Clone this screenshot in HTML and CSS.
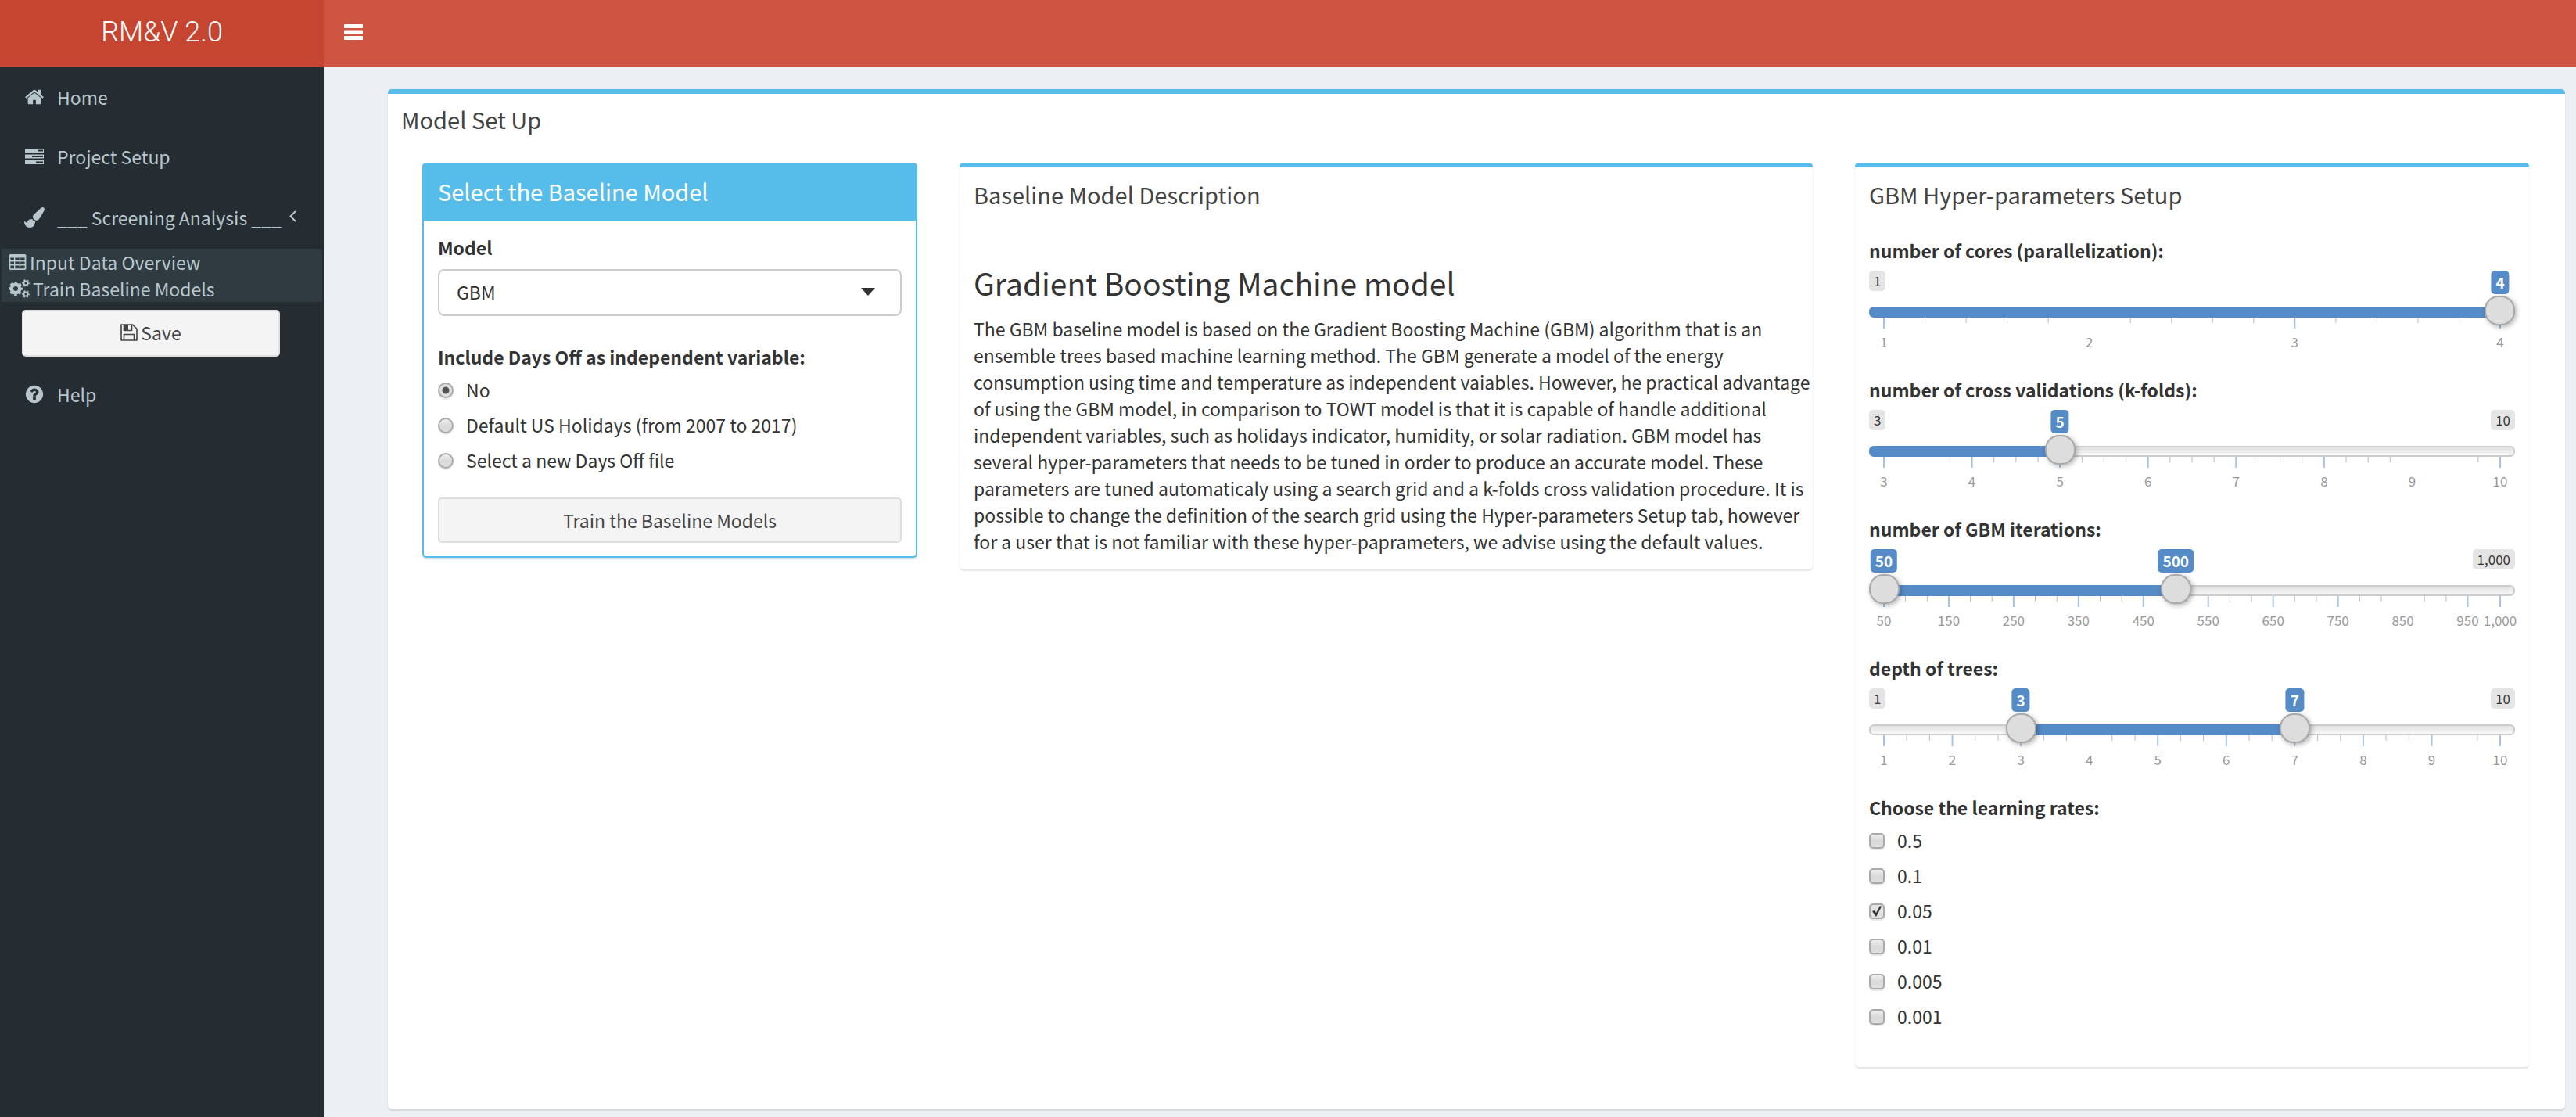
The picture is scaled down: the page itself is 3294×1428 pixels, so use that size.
FILE: index.html
```html
<!DOCTYPE html>
<html lang="en">
<head>
<meta charset="utf-8">
<title>RM&amp;V 2.0</title>
<link rel="stylesheet" href="styles.css">
</head>
<body>
<header class="topbar">
  <a class="logo" href="#">RM&amp;V 2.0</a>
  <nav class="navbar">
    <button class="toggle" type="button" aria-label="Toggle navigation">
      <svg class="icon-bars" viewBox="0 0 24 20"><rect width="24" height="5" rx="1"/><rect y="7.500" width="24" height="5" rx="1"/><rect y="15" width="24" height="5" rx="1"/></svg>
    </button>
  </nav>
</header>
<div class="layout">
  <aside class="sidebar">
    <a class="item" href="#">
      <svg class="icon" viewBox="0 0 1792 1792"><path d="M1472 992v480q0 26-19 45t-45 19h-384v-384h-256v384h-384q-26 0-45-19t-19-45v-480q0-1 .5-3t.5-3l575-474 575 474q1 2 1 6zm223-69l-62 74q-8 9-21 11h-3q-13 0-21-7l-692-577-692 577q-12 8-24 7-13-2-21-11l-62-74q-8-10-7-23.500t11-21.500l719-599q32-26 76-26t76 26l244 204v-195q0-14 9-23t23-9h192q14 0 23 9t9 23v408l219 182q10 8 11 21.500t-7 23.500z"/></svg>
      <span>Home</span>
    </a>
    <a class="item" href="#">
      <svg class="icon" viewBox="0 0 26 26"><path fill-rule="evenodd" d="M1 3h24v5H1zM18 4.500v2h6v-2zM1 10.500h24v5H1zM10 12v2h14v-2zM1 18h24v5H1zM15 19.500v2h9v-2z"/></svg>
      <span>Project Setup</span>
    </a>
    <a class="item item-tall" href="#">
      <svg class="icon" viewBox="0 0 1792 1792"><path d="M1615 0q70 0 122.500 46.500t52.500 116.500q0 63-45 151-332 629-465 752-97 91-218 91-126 0-216.500-92.500t-90.500-219.500q0-128 92-212l638-579q59-54 130-54zm-909 1034q39 76 106.500 130t150.500 76l1 71q4 213-129.500 347t-348.500 134q-123 0-218-46.500t-152.500-127.500-86.500-183-29-220q7 5 41 30t62 44.500 59 36.500 46 17q41 0 55-37 25-66 57.500-112.500t69.500-76 88-47.500 103-25.500 125-10.500z"/></svg>
      <span>___ Screening Analysis ___</span>
      <svg class="angle" viewBox="0 0 9 15"><path d="M8 1 1.500 7.500 8 14"/></svg>
    </a>
    <div class="submenu">
      <a class="subitem" href="#">
        <svg class="icon-table" viewBox="0 0 24 22"><path fill-rule="evenodd" d="M2 0h20q2 0 2 2v18q0 2-2 2H2q-2 0-2-2V2q0-2 2-2zM2 5v3.500h5V5zM8.500 5v3.500h6V5zM16 5v3.500h6V5zM2 10.500v3.500h5v-3.500zM8.500 10.500v3.500h6v-3.500zM16 10.500v3.500h6v-3.500zM2 16v4h5v-4zM8.500 16v4h6v-4zM16 16v4h6v-4z"/></svg>
        Input Data Overview
      </a>
      <a class="subitem" href="#">
        <svg class="icon-cogs" viewBox="0 0 27 24">
          <g fill="none" stroke="currentColor">
            <circle cx="9" cy="12" r="5.200" stroke-width="4.400"/>
            <circle cx="9" cy="12" r="7.700" stroke-width="2.800" stroke-dasharray="3.300 2.748" stroke-dashoffset="1.650"/>
            <circle cx="22" cy="5" r="2.600" stroke-width="2"/>
            <circle cx="22" cy="5" r="4" stroke-width="1.800" stroke-dasharray="2 2.189" stroke-dashoffset="1"/>
            <circle cx="22" cy="19" r="2.600" stroke-width="2"/>
            <circle cx="22" cy="19" r="4" stroke-width="1.800" stroke-dasharray="2 2.189" stroke-dashoffset="1"/>
          </g>
        </svg>
        Train Baseline Models
      </a>
    </div>
    <button class="btn btn-save" type="button">
      <svg class="icon-save" viewBox="0 0 22 22"><path fill="none" stroke="currentColor" stroke-width="1.600" stroke-linejoin="round" d="M1 1h14.500L21 6.500V21H1zM4.500 21v-7.500h13V21M4.500 1v7.500h10V1"/><path d="M5 1.500h5v6.500H5z"/></svg>
      Save
    </button>
    <a class="item" href="#">
      <svg class="icon" viewBox="0 0 1792 1792"><path d="M1024 1376v-192q0-14-9-23t-23-9h-192q-14 0-23 9t-9 23v192q0 14 9 23t23 9h192q14 0 23-9t9-23zm256-672q0-88-55.500-163t-138.500-116-170-41q-243 0-371 213-15 24 8 42l132 100q7 6 19 6 16 0 25-12 53-68 86-92 34-24 86-24 48 0 85.500 26t37.500 59q0 38-20 61t-68 45q-63 28-115.500 86.500t-52.500 125.500v36q0 14 9 23t23 9h192q14 0 23-9t9-23q0-19 21.500-49.500t54.500-49.500q32-18 49-28.500t46-35 44.500-48 28-60.500 12.500-81zm384 192q0 209-103 385.500t-279.500 279.500-385.500 103-385.500-103-279.500-279.500-103-385.500 103-385.500 279.500-279.500 385.500-103 385.500 103 279.500 279.500 103 385.500z"/></svg>
      <span>Help</span>
    </a>
  </aside>
  <main class="content">
    <section class="box box-outer">
      <h2 class="box-title">Model Set Up</h2>
      <div class="columns">
        <div class="column">
          <section class="box box-solid">
            <h3 class="box-title">Select the Baseline Model</h3>
            <form class="box-body">
              <label class="label" for="model">Model</label>
              <div class="select-wrap">
                <select class="select" id="model"><option>GBM</option><option>TOWT</option></select>
                <svg class="caret" viewBox="0 0 18 10"><path d="M0 0h18L9 10z"/></svg>
              </div>
              <fieldset class="group">
                <legend class="label">Include Days Off as independent variable:</legend>
                <div class="options">
                  <label class="option"><input class="radio" type="radio" name="daysoff" checked>No</label>
                  <label class="option"><input class="radio" type="radio" name="daysoff">Default US Holidays (from 2007 to 2017)</label>
                  <label class="option"><input class="radio" type="radio" name="daysoff">Select a new Days Off file</label>
                </div>
              </fieldset>
              <button class="btn btn-train" type="button">Train the Baseline Models</button>
            </form>
          </section>
        </div>
        <div class="column">
          <section class="box">
            <h3 class="box-title">Baseline Model Description</h3>
            <div class="box-body box-text">
              <h4 class="heading">Gradient Boosting Machine model</h4>
              <p class="text">The GBM baseline model is based on the Gradient Boosting Machine (GBM) algorithm that is an<br>
              ensemble trees based machine learning method. The GBM generate a model of the energy<br>
              consumption using time and temperature as independent vaiables. However, he practical advantage<br>
              of using the GBM model, in comparison to TOWT model is that it is capable of handle additional<br>
              independent variables, such as holidays indicator, humidity, or solar radiation. GBM model has<br>
              several hyper-parameters that needs to be tuned in order to produce an accurate model. These<br>
              parameters are tuned automaticaly using a search grid and a k-folds cross validation procedure. It is<br>
              possible to change the definition of the search grid using the Hyper-parameters Setup tab, however<br>
              for a user that is not familiar with these hyper-paprameters, we advise using the default values.</p>
            </div>
          </section>
        </div>
        <div class="column">
          <section class="box">
            <h3 class="box-title">GBM Hyper-parameters Setup</h3>
            <form class="box-body box-params">
              <label class="label" for="cores">number of cores (parallelization):</label>
              <div class="slider" data-min="1" data-max="4" data-labels="1,2,3,4" data-minor="1.2,1.4,1.6,1.8,2.2,2.4,2.6,2.8,3.2,3.4,3.6,3.8" data-bare="2">
                <input class="range" id="cores" type="range" min="1" max="4" value="4">
              </div>
              <label class="label" for="folds">number of cross validations (k-folds):</label>
              <div class="slider" data-min="3" data-max="10" data-labels="3,4,5,6,7,8,9,10" data-minor="3.75,4.25,4.5,4.75,5.25,5.5,5.75,6.25,6.5,6.75,7.25,7.5,7.75,8.25,8.5,8.75,9.75" data-bare="9">
                <input class="range" id="folds" type="range" min="3" max="10" value="5">
              </div>
              <label class="label" for="iterations">number of GBM iterations:</label>
              <div class="slider" data-min="50" data-max="1000" data-labels="50,150,250,350,450,550,650,750,850,950,1000" data-minor="83.3,116.7,183.3,216.7,283.3,316.7,383.3,416.7,483.3,516.7,583.3,616.7,683.3,716.7,783.3,816.7,883.3,916.7" data-bare="850">
                <input class="range" id="iterations" type="range" min="50" max="1000" value="50">
                <input class="range" type="range" min="50" max="1000" value="500" aria-label="most GBM iterations">
              </div>
              <label class="label" for="depth">depth of trees:</label>
              <div class="slider" data-min="1" data-max="10" data-labels="1,2,3,4,5,6,7,8,9,10" data-minor="1.333,1.667,2.333,2.667,3.333,3.667,4.333,4.667,5.333,5.667,6.333,6.667,7.333,7.667,8.333,8.667,9.667" data-bare="4">
                <input class="range" id="depth" type="range" min="1" max="10" value="3">
                <input class="range" type="range" min="1" max="10" value="7" aria-label="greatest depth of trees">
              </div>
              <fieldset class="group">
                <legend class="label">Choose the learning rates:</legend>
                <div class="options">
                  <label class="option"><input class="check" type="checkbox">0.5</label>
                  <label class="option"><input class="check" type="checkbox">0.1</label>
                  <label class="option"><input class="check" type="checkbox" checked>0.05</label>
                  <label class="option"><input class="check" type="checkbox">0.01</label>
                  <label class="option"><input class="check" type="checkbox">0.005</label>
                  <label class="option"><input class="check" type="checkbox">0.001</label>
                </div>
              </fieldset>
            </form>
          </section>
        </div>
      </div>
    </section>
  </main>
</div>
<script src="sliders.js"></script>
</body>
</html>
```
FILE: styles.css
```css
* { box-sizing: border-box; }

body {
  margin: 0;
  min-height: 100vh;
  display: flex;
  flex-direction: column;
  background: #ecf0f5;
  color: #333;
  font: 23px/34px "Noto Sans CJK SC", "Open Sans", sans-serif;
}

h2, h3, h4, p, fieldset { margin: 0; }
a { color: inherit; text-decoration: none; }
button, select, input { font: inherit; color: inherit; margin: 0; }
svg { display: block; flex: none; fill: currentColor; }

.topbar { display: flex; height: 86px; color: #fff; }
.logo {
  width: 414px;
  background: #c64531;
  font: 300 36px/82px Roboto, "Liberation Sans", sans-serif;
  text-align: center;
}
.navbar { flex: 1; display: flex; align-items: center; background: #ce5542; }
.toggle { border: 0; padding: 0 26px 4px; background: none; }
.icon-bars { width: 24px; height: 20px; }

.layout { flex: 1; display: flex; }
.sidebar { width: 414px; flex: none; background: #252d32; color: #b8c7ce; }
.item { display: flex; align-items: center; height: 76px; padding-left: 31px; }
.item span { margin-left: 16px; }
.item-tall { height: 80px; }
.icon { width: 26px; height: 26px; }
.angle {
  width: 9px;
  height: 15px;
  margin: 0 0 4px 10px;
  fill: none;
  stroke: currentColor;
  stroke-width: 2;
}
.submenu { margin: 0 2px; background: #303b41; }
.subitem { display: flex; align-items: center; gap: 4px; padding-left: 9px; }
.icon-table { width: 23px; height: 20px; }
.icon-cogs { width: 27px; height: 24px; }

.btn {
  display: flex;
  align-items: center;
  justify-content: center;
  border: 2px solid #ddd;
  border-radius: 5px;
  background: #f4f4f4;
  color: #444;
}
.btn-save { width: 330px; height: 60px; margin: 10px 28px; padding-bottom: 4px; gap: 4px; }
.btn-train { width: 100%; height: 58px; margin-top: 31px; }
.icon-save { width: 22px; height: 22px; }

.content { flex: 1; min-width: 0; padding: 28px 14px 10px 82px; }
.box {
  border-top: 6px solid #56bdeb;
  border-radius: 5px;
  background: #fff;
  box-shadow: 0 2px 2px rgba(0, 0, 0, .1), 0 0 2px rgba(0, 0, 0, .06);
}
.box-outer { padding-bottom: 54px; }
.box-title { padding: 17px 18px 21px; color: #444; font-size: 29px; font-weight: 400; line-height: 34px; }
.box-outer > .box-title { padding: 15px 17px 23px; }
.columns { display: grid; grid-template-columns: 3fr 5fr 4fr; align-items: start; padding: 16px 19px 0 17px; }
.column { padding: 0 27px; }
.box-solid { border: 2px solid #56bdeb; }
.box-solid > .box-title { background: #56bdeb; color: #fff; }
.box-body { padding: 17px 18px; }
.box-text { padding-right: 0; }
.box-params { padding-bottom: 48px; }

.label { display: block; padding: 0; font-weight: 700; }
.select-wrap { position: relative; margin: 11px 0 35px; }
.select {
  display: block;
  width: 100%;
  height: 60px;
  padding: 0 22px 2px;
  border: 2px solid #ccc;
  border-radius: 8px;
  background: #fff;
  appearance: none;
}
.caret { position: absolute; right: 34px; top: 24px; width: 18px; height: 10px; pointer-events: none; }

.group { border: 0; padding: 0; min-width: 0; }
.options { display: flex; flex-direction: column; align-items: flex-start; gap: 11px; padding-top: 8px; }
.option { display: flex; align-items: center; gap: 16px; }
.radio, .check {
  appearance: none;
  width: 20px;
  height: 20px;
  margin-top: 2px;
  border: 2px solid #aaa;
  border-radius: 50%;
  background: linear-gradient(#eee, #d9d9d9 50%, #dedede);
  box-shadow: 0 2px 1px rgba(0, 0, 0, .1);
}
.check { border-radius: 5px; }
.radio:checked { background: radial-gradient(circle, #555 4px, #e0e0e0 5px); }
.check:checked {
  background: url("data:image/svg+xml,%3Csvg xmlns='http://www.w3.org/2000/svg' viewBox='0 0 16 16'%3E%3Cpath d='M2 8l3-1 2 3 5-9 2 1-7 13z' fill='%23333'/%3E%3C/svg%3E") #e2e2e2;
}

.heading { padding-top: 35px; font-size: 39px; font-weight: 400; line-height: 46px; }
.text { padding: 19px 0 2px; }

.slider { position: relative; height: 100px; margin: 9px 0 35px; }
.track {
  position: absolute;
  inset: 46px 0 auto;
  height: 14px;
  border: 2px solid #ccc;
  border-radius: 6px;
  background: linear-gradient(#e0e0e0, #f8f8f8);
}
.fill { position: absolute; top: 46px; height: 14px; background: #558bc7; }
.fill-start { border-radius: 6px 0 0 6px; }
.scale { position: absolute; left: 19px; top: 60px; width: calc(100% - 38px); height: 40px; overflow: visible; }
.scale text { fill: #999; font-size: 17px; text-anchor: middle; }
.tick { stroke: #bbb; stroke-width: 1; }
.tick-major { stroke: #a6c3e2; stroke-width: 2; }
.limit, .value {
  position: absolute;
  top: 0;
  padding: 0 6px;
  border-radius: 5px;
  background: #e4e4e4;
  font-size: 17px;
  line-height: 26px;
}
.limit-max { right: 0; }
.value {
  transform: translateX(-50%);
  background: #558bc7;
  color: #fff;
  font-size: 19px;
  font-weight: 700;
  line-height: 30px;
}
.range {
  position: absolute;
  left: 0;
  top: 32px;
  z-index: 1;
  width: 100%;
  height: 38px;
  background: none;
  appearance: none;
  pointer-events: none;
}
.range::-webkit-slider-thumb {
  appearance: none;
  width: 39px;
  height: 38px;
  border: 2px solid #aaa;
  border-radius: 18px;
  background: #ddd;
  box-shadow: 2px 2px 6px rgba(0, 0, 0, .3);
  pointer-events: auto;
}
```
FILE: sliders.js
```js
// Builds the track, scale and value badges round each slider's range inputs.
const list = (text) => text.split(",").map(Number);

document.querySelectorAll(".slider").forEach((slider) => {
  const { min, max, labels, minor, bare } = slider.dataset;
  const inputs = [...slider.querySelectorAll("input")];
  const share = (value) => (value - min) / (max - min);
  const place = (value) => `calc(19px + (100% - 38px) * ${share(value)})`;
  const percent = (value) => `${share(value) * 100}%`;
  const line = (value, length, name) =>
    `<line class="${name}" x1="${percent(value)}" x2="${percent(value)}" y1="0" y2="${length}"/>`;

  const scale =
    list(minor).map((v) => line(v, 7, "tick")).join("") +
    list(labels).filter((v) => v !== Number(bare)).map((v) => line(v, 14, "tick tick-major")).join("") +
    list(labels).map((v) => `<text x="${percent(v)}" y="38">${v.toLocaleString("en-US")}</text>`).join("");

  slider.insertAdjacentHTML(
    "afterbegin",
    `<div class="track"></div><div class="fill"></div><svg class="scale">${scale}</svg>` +
      `<span class="limit limit-min">${Number(min).toLocaleString("en-US")}</span>` +
      `<span class="limit limit-max">${Number(max).toLocaleString("en-US")}</span>` +
      inputs.map(() => `<output class="value"></output>`).join("")
  );

  const fill = slider.querySelector(".fill");
  const badges = slider.querySelectorAll(".value");
  const update = () => {
    const values = inputs.map((input) => Number(input.value));
    const single = values.length === 1;
    fill.classList.toggle("fill-start", single);
    fill.style.left = single ? "0" : place(Math.min(...values));
    fill.style.right = `calc(100% - ${place(Math.max(...values))})`;
    badges.forEach((badge, i) => {
      badge.textContent = values[i].toLocaleString("en-US");
      badge.style.left = place(values[i]);
    });
    slider.querySelector(".limit-min").hidden = values.some((v) => share(v) < 0.04);
    slider.querySelector(".limit-max").hidden = values.some((v) => share(v) > 0.96);
  };
  inputs.forEach((input) => input.addEventListener("input", update));
  update();
});
```
